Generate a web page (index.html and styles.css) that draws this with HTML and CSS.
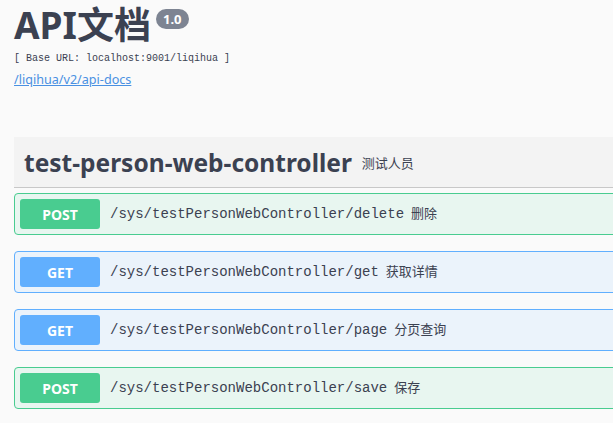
FILE: index.html
```html
<!DOCTYPE html>
<html lang="zh">
<head>
<meta charset="utf-8">
<link rel="stylesheet" href="styles.css">
</head>
<body>
<div class="page">
  <div class="info">
    <h2 class="title">API文档<span class="version">1.0</span></h2>
    <div class="base-url">[ Base URL: localhost:9001/liqihua ]</div>
    <a class="docs-link" href="#">/liqihua/v2/api-docs</a>
  </div>
  <div class="tag-section">
    <h4 class="tag-header"><span class="tag-name">test-person-web-controller</span><span class="tag-desc">测试人员</span></h4>
    <div class="op op-post"><span class="method">POST</span><span class="path">/sys/testPersonWebController/delete</span><span class="summary">删除</span></div>
    <div class="op op-get"><span class="method">GET</span><span class="path">/sys/testPersonWebController/get</span><span class="summary">获取详情</span></div>
    <div class="op op-get"><span class="method">GET</span><span class="path">/sys/testPersonWebController/page</span><span class="summary">分页查询</span></div>
    <div class="op op-post"><span class="method">POST</span><span class="path">/sys/testPersonWebController/save</span><span class="summary">保存</span></div>
  </div>
</div>
</body>
</html>
```

FILE: styles.css
```css
html, body {
  margin: 0;
  padding: 0;
  overflow: hidden;
  background: #fafafa;
}
body {
  font-family: "Noto Sans", "Noto Sans CJK SC", sans-serif;
  color: #3b4151;
}
.page {
  width: 660px;
  padding: 0 0 0 14px;
}
.info {
  padding-top: 2px;
}
.title {
  margin: 0;
  font-size: 37px;
  line-height: 46px;
  font-weight: 700;
  color: #3b4151;
  display: flex;
  align-items: flex-start;
}
.version {
  margin: 7px 0 0 5px;
  background: #7d8492;
  color: #fff;
  font-size: 13px;
  line-height: 20px;
  padding: 0 7px;
  border-radius: 10px;
  font-weight: 700;
}
.base-url {
  font-family: "Liberation Mono", monospace;
  font-size: 10px;
  line-height: 14px;
  margin-top: 4px;
  color: #3b4151;
}
.docs-link {
  display: inline-block;
  margin-top: 6px;
  font-size: 12.6px;
  line-height: 16px;
  color: #4990e2;
  text-decoration: underline;
}
.tag-section {
  margin-top: 48px;
}
.tag-header {
  margin: 0;
  height: 50px;
  background: #f3f3f3;
  border-bottom: 1px solid #c8c8c8;
  display: flex;
  align-items: center;
  padding-left: 10px;
}
.tag-name {
  font-size: 24.5px;
  font-weight: 700;
  color: #3b4151;
}
.tag-desc {
  font-size: 13px;
  font-weight: 400;
  margin-left: 10px;
}
.op {
  margin-bottom: 16px;
  height: 40px;
  border: 1px solid;
  border-radius: 4px;
  display: flex;
  align-items: center;
  padding-left: 5px;
}
.tag-header + .op {
  margin-top: 5px;
}
.op-post {
  background: #e8f6f0;
  border-color: #49cc90;
}
.op-get {
  background: #ebf3fb;
  border-color: #61affe;
}
.method {
  width: 80px;
  height: 30px;
  border-radius: 3px;
  color: #fff;
  font-size: 14px;
  font-weight: 700;
  display: flex;
  align-items: center;
  justify-content: center;
}
.op-post .method { background: #49cc90; }
.op-get .method { background: #61affe; }
.path {
  font-family: "Liberation Mono", monospace;
  font-size: 14px;
  line-height: 18px;
  margin-left: 10px;
  color: #3b4151;
}
.summary {
  font-size: 13px;
  line-height: 18px;
  margin-left: 7px;
  margin-bottom: 3px;
  color: #3b4151;
}
```
